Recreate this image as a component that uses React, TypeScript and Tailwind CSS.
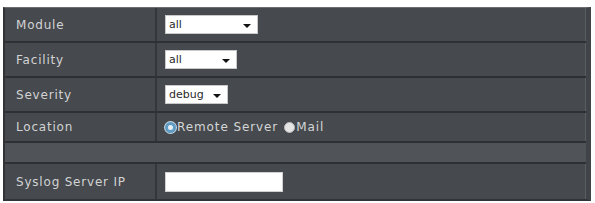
import { ReactNode } from 'react'

type RowProps = {
    label?: string
    height: string
    children?: ReactNode
}

function Row({ label, height, children }: RowProps) {
    return (
        <div className={`flex border-b-2 border-[#2e3033] ${height}`}>
            <div className="w-[152px] shrink-0 flex items-center pl-[11px] border-r-2 border-[#35373a] text-[12px] tracking-[0.8px] text-[#d2d3d4]">
                {label}
            </div>
            <div className="flex-1 flex items-center pl-[8px] border-r border-[#5a5d61]">
                {children}
            </div>
        </div>
    )
}

function Select({ value, width }: { value: string; width: string }) {
    return (
        <div className={`h-[19px] ${width} bg-white flex items-center justify-between pl-[3px] pr-[6px] pt-[2px] border border-[#c9c9c9] text-[11px] text-[#2a2a2a]`}>
            <span>{value}</span>
            <span className="w-0 h-0 border-l-[4px] border-r-[4px] border-t-[4px] border-l-transparent border-r-transparent border-t-[#111]" />
        </div>
    )
}

export default function App() {
    return (
        <div className="w-[595px] h-[203px] bg-white pt-[7px] pl-[3px] font-['DejaVu_Sans',Verdana,sans-serif]">
            <div className="w-[588px] bg-[#46494d] border-2 border-t border-[#313336] border-t-[#6b6d70] border-r-[5px] border-r-[#404347]">
                <Row label="Module" height="h-[35px]">
                    <Select value="all" width="w-[93px]" />
                </Row>
                <Row label="Facility" height="h-[35px]">
                    <Select value="all" width="w-[72px]" />
                </Row>
                <Row label="Severity" height="h-[35px]">
                    <Select value="debug" width="w-[63px]" />
                </Row>
                <Row label="Location" height="h-[30px]">
                    <div className="flex items-center text-[12px] tracking-[0.9px] text-[#d4d5d6]">
                        <span className="w-[11px] h-[11px] rounded-full bg-[#e8eef2] border-[3px] border-[#5f9cc4] ring-1 ring-[#c8d6df] mr-[1px]" />
                        <span>Remote Server</span>
                        <span className="w-[11px] h-[11px] rounded-full bg-[#e4e4e4] border border-[#bdbdbd] ml-[6px] mr-[1px]" />
                        <span>Mail</span>
                    </div>
                </Row>
                <div className="h-[21px] bg-[#505357] border-b-2 border-[#2e3033]" />
                <div className="flex h-[35px]">
                    <div className="w-[152px] shrink-0 flex items-center pl-[11px] border-r-2 border-[#35373a] text-[12px] tracking-[0.8px] text-[#d2d3d4]">
                        Syslog Server IP
                    </div>
                    <div className="flex-1 flex items-center pl-[8px] border-r border-[#5a5d61]">
                        <div className="w-[118px] h-[20px] bg-white border border-[#d0d0d0]" />
                    </div>
                </div>
            </div>
        </div>
    )
}
